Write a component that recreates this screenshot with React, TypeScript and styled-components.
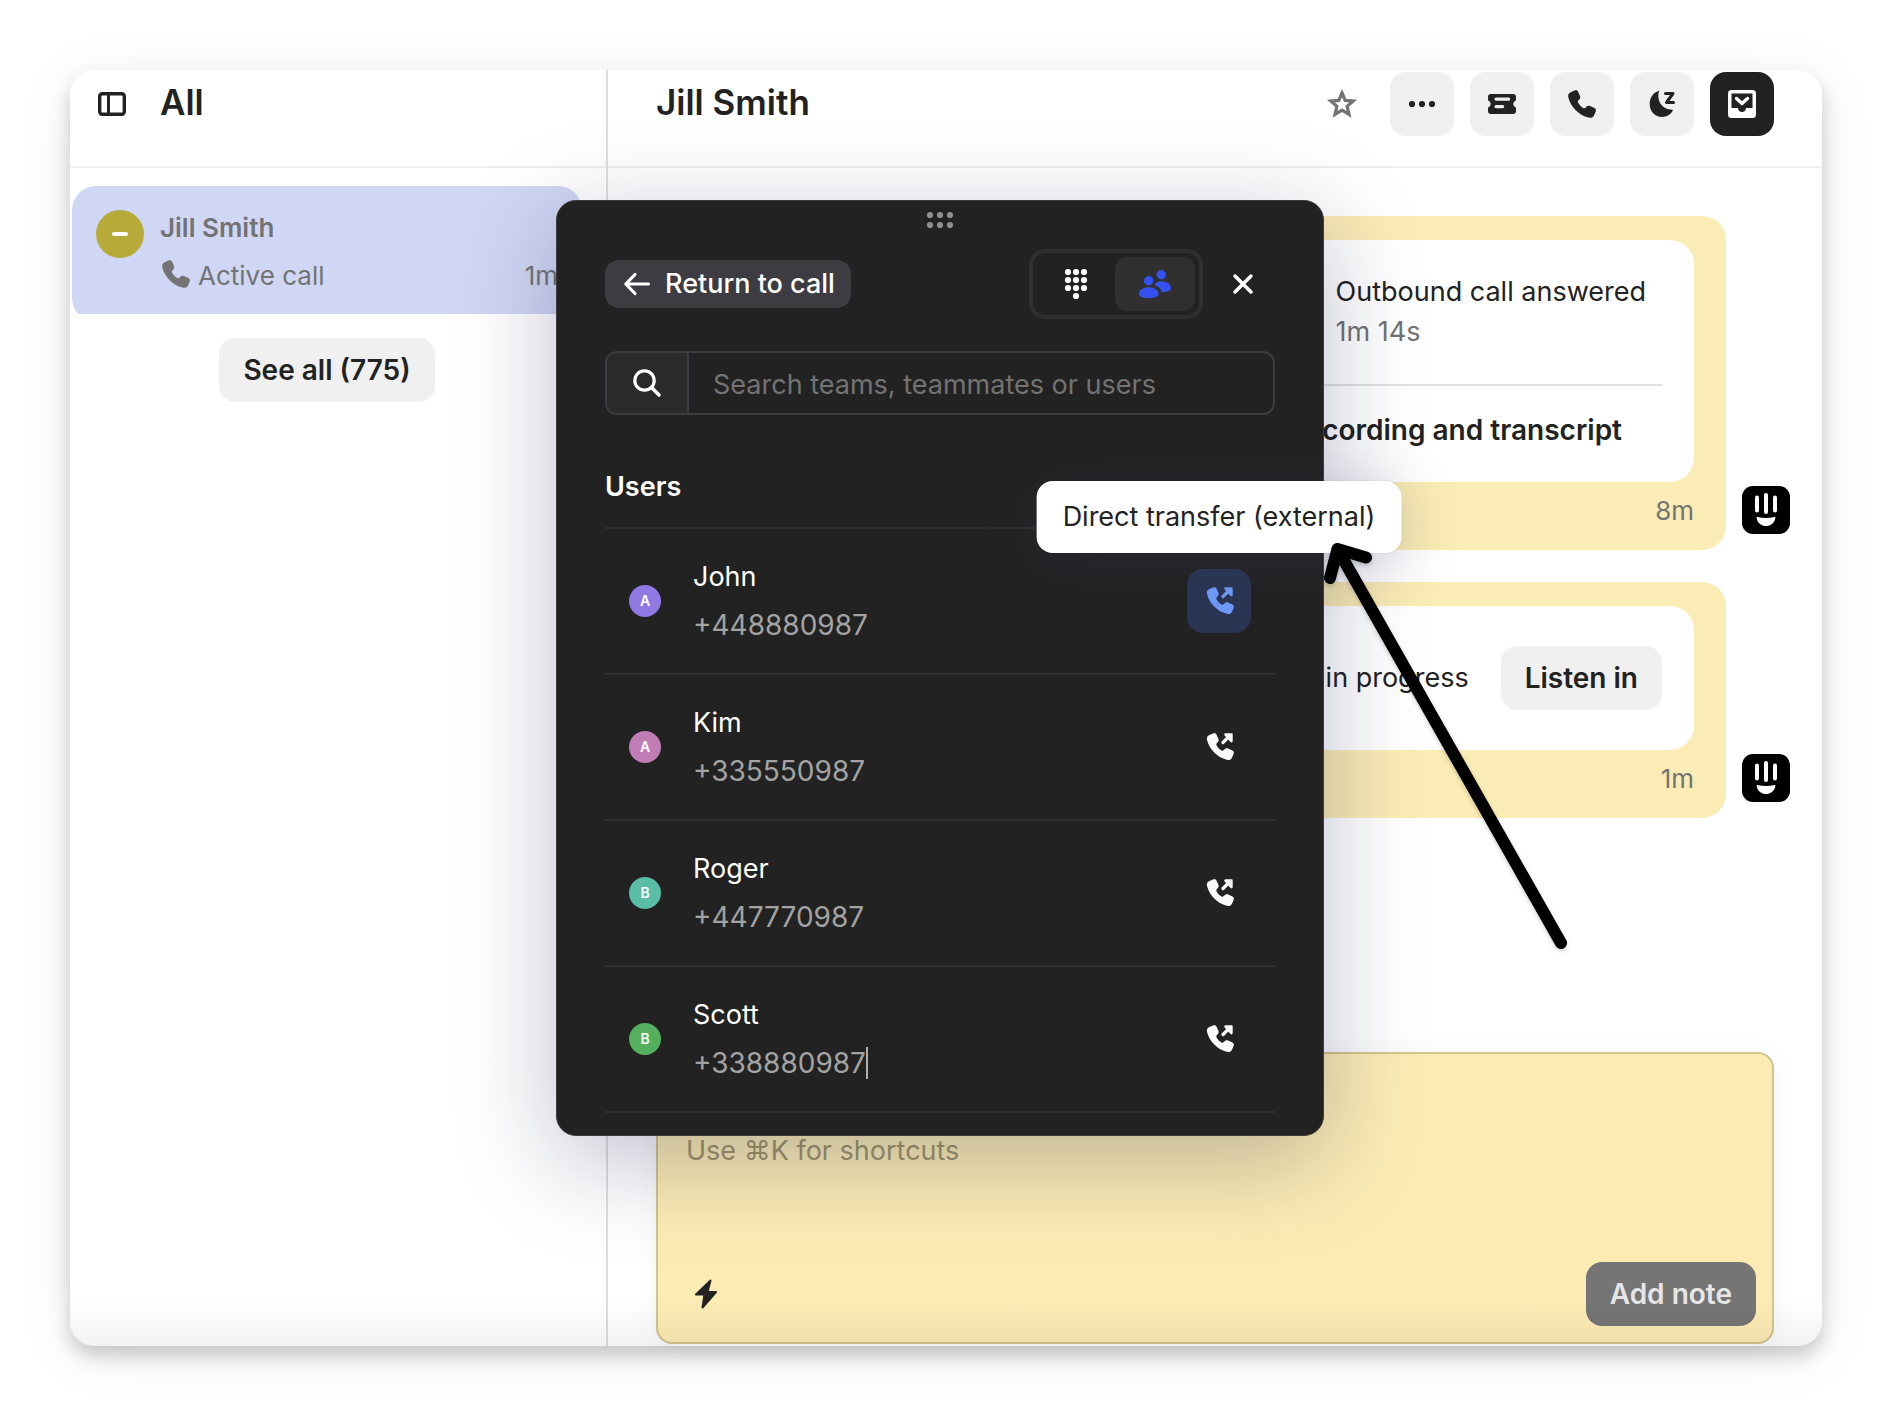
import React from "react";
import styled, { createGlobalStyle, css } from "styled-components";

const GlobalStyle = createGlobalStyle`
  *, *::before, *::after { box-sizing: border-box; }
  body {
    margin: 0;
    background: #fff;
    color: #222;
    font-family: Inter, "Liberation Sans", sans-serif;
    font-size: 27px;
    line-height: 40px;
  }
  h1, h2, p, ul { margin: 0; padding: 0; }
  ul { list-style: none; }
  button, input, textarea { font: inherit; color: inherit; border: 0; margin: 0; }
  button { cursor: pointer; padding: 0; }
  svg { display: block; flex: none; }
`;

const Page = styled.div`
  min-height: 100vh;
  padding: 70px 72px 70px 70px;
  display: flex;
`;

const Window = styled.div`
  position: relative;
  flex: 1;
  display: grid;
  grid-template-columns: 538px minmax(0, 1fr);
  background: #fff;
  border-radius: 24px;
  box-shadow: 0 10px 18px rgba(0, 0, 0, 0.18), 0 8px 56px rgba(0, 0, 0, 0.08);

  &::after {
    content: "";
    position: absolute;
    left: 0;
    right: 0;
    bottom: 0;
    height: 48px;
    border-radius: 0 0 24px 24px;
    background: linear-gradient(rgba(0, 0, 0, 0), rgba(0, 0, 0, 0.05));
    pointer-events: none;
  }
`;

const Sidebar = styled.aside`
  display: flex;
  flex-direction: column;
  border-right: 2px solid #dedede;
`;

const Main = styled.main`
  display: flex;
  flex-direction: column;
`;

const Header = styled.header<{ $main?: boolean }>`
  display: flex;
  align-items: center;
  gap: 16px;
  height: 98px;
  padding: ${(p) => (p.$main ? "2px 48px 30px" : "2px 26px 30px")};
  border-bottom: 2px solid #efefef;
`;

const Title = styled.h1`
  font-size: 35px;
  line-height: 40px;
  font-weight: 600;
  padding-bottom: 4px;
`;

const Actions = styled.div`
  display: flex;
  gap: 16px;
  margin-left: auto;
`;

type Tone = "plain" | "soft" | "dark" | "blue" | "ghost";
const tones: Record<Tone, ReturnType<typeof css>> = {
  plain: css`background: transparent; color: #737373;`,
  soft: css`background: #f0f0f0; color: #222;`,
  dark: css`background: #222; color: #fff;`,
  blue: css`background: #2a3553; color: #6f9bf8;`,
  ghost: css`background: transparent; color: #fafafa;`,
};

const IconButton = styled.button<{ $tone: Tone }>`
  display: flex;
  align-items: center;
  justify-content: center;
  width: 64px;
  height: 64px;
  border-radius: 16px;
  ${(p) => tones[p.$tone]}
`;

const SidebarToggle = styled.button`
  margin-right: 16px;
  background: transparent;
  color: #222;
`;

const TextButton = styled.button<{ $muted?: boolean }>`
  height: 64px;
  padding: 0 24px;
  border-radius: 16px;
  font-weight: 600;
  font-size: 28px;
  white-space: nowrap;
  background: ${(p) => (p.$muted ? "#757575" : "#f0f0f0")};
  color: ${(p) => (p.$muted ? "#e6e6e6" : "#222")};
`;

const ListClip = styled.div`
  height: 128px;
  margin: 18px 24px 24px 2px;
  overflow: hidden;
`;

const Conversation = styled.a`
  display: flex;
  gap: 16px;
  height: 136px;
  padding: 24px;
  border-radius: 24px;
  background: #d0d7f4;
  color: #737373;
  text-decoration: none;
`;

const Avatar = styled.span<{ $color: string; $large?: boolean }>`
  display: flex;
  align-items: center;
  justify-content: center;
  flex: none;
  width: ${(p) => (p.$large ? "48px" : "32px")};
  height: ${(p) => (p.$large ? "48px" : "32px")};
  border-radius: 50%;
  background: ${(p) => p.$color};
  color: #fff;
  font-size: 14px;
  line-height: 16px;
  font-weight: 600;
`;

const Dash = styled.span`
  width: 16px;
  height: 4px;
  border-radius: 2px;
  background: #fff;
`;

const ConversationBody = styled.div`
  flex: 1;
  display: flex;
  flex-direction: column;
  gap: 12px;
  font-size: 26px;
  line-height: 36px;
`;

const ConversationName = styled.span`
  font-weight: 600;
`;

const ConversationMeta = styled.span`
  display: flex;
  align-items: flex-start;
  gap: 6px;
`;

const Ago = styled.time`
  margin-left: auto;
`;

const SeeAll = styled.div`
  display: flex;
  justify-content: center;
  padding-right: 22px;
`;

const Feed = styled.div`
  flex: 1;
  display: flex;
  flex-direction: column;
  align-items: flex-end;
  gap: 32px;
  padding: 48px 32px;
`;

const Entry = styled.article`
  display: flex;
  align-items: flex-end;
  gap: 16px;
`;

const Note = styled.div`
  width: 630px;
  padding: 24px 32px 0;
  border-radius: 24px;
  background: #fbebb4;
`;

const NoteCard = styled.div`
  padding: 32px;
  border-radius: 24px;
  background: #fff;
`;

const NoteFoot = styled.div`
  height: 68px;
  padding-top: 9px;
  text-align: right;
  font-size: 26px;
  color: #737373;
`;

const Logo = styled.span`
  padding-bottom: 16px;
`;

const CallRow = styled.div`
  display: flex;
  justify-content: flex-end;
  align-items: center;
  gap: 32px;
`;

const CallSummary = styled.div`
  padding: 0 16px 32px 0;
`;

const Muted = styled.p`
  color: #737373;
`;

const Divider = styled.hr`
  height: 2px;
  margin: 0;
  border: 0;
  background: #e0e0e0;
`;

const RecordingLink = styled.a`
  display: block;
  padding: 24px 40px 0 0;
  text-align: right;
  font-size: 28px;
  font-weight: 600;
  color: #222;
  text-decoration: none;
`;

const CallCard = styled(NoteCard)`
  padding: 40px 32px;
`;

const Composer = styled.form`
  display: flex;
  flex-direction: column;
  height: 292px;
  margin: 0 48px 2px;
  padding: 77px 16px 16px 28px;
  border: 2px solid #d3c48a;
  border-radius: 16px;
  background: #fcecb4;
  box-shadow: 0 2px 24px rgba(20, 30, 80, 0.05);
`;

const NoteInput = styled.textarea`
  flex: 1;
  padding: 0;
  border: 0;
  outline: 0;
  resize: none;
  overflow: hidden;
  background: transparent;
  &::placeholder { color: #a09468; opacity: 1; }
`;

const ComposerBar = styled.div`
  display: flex;
  align-items: center;
  justify-content: space-between;
`;

const BoltButton = styled.button`
  display: flex;
  align-items: center;
  justify-content: center;
  width: 40px;
  height: 40px;
  background: transparent;
  color: #222;
`;

const CallPanel = styled.section`
  position: absolute;
  z-index: 2;
  top: 130px;
  left: 486px;
  width: 768px;
  height: 936px;
  padding: 10px 48px 0;
  border: 1px solid #3d3c42;
  border-radius: 20px;
  background: #222;
  color: #fff;
  box-shadow: 0 24px 100px rgba(16, 20, 70, 0.27);
`;

const Grip = styled.div`
  display: flex;
  justify-content: center;
`;

const PanelBar = styled.div`
  display: flex;
  align-items: center;
  height: 70px;
  margin: 20px 0 32px;
`;

const ReturnButton = styled.button`
  display: flex;
  align-items: center;
  gap: 12px;
  height: 48px;
  padding: 0 16px;
  border-radius: 14px;
  background: #3d3c42;
  font-weight: 500;
  white-space: nowrap;
`;

const Segments = styled.div`
  display: flex;
  margin-left: auto;
  padding: 4px;
  border: 4px solid #303030;
  border-radius: 16px;
`;

const Segment = styled.button<{ $on?: boolean }>`
  display: flex;
  align-items: center;
  justify-content: center;
  width: ${(p) => (p.$on ? "80px" : "78px")};
  height: 54px;
  border-radius: 12px;
  background: ${(p) => (p.$on ? "#303030" : "transparent")};
  color: ${(p) => (p.$on ? "#3452f3" : "#fff")};
`;

const CloseButton = styled.button`
  margin: 0 16px 0 24px;
  padding: 0;
  background: transparent;
  color: #fff;
`;

const SearchBox = styled.label`
  display: flex;
  height: 64px;
  border: 2px solid #3d3c42;
  border-radius: 12px;
  overflow: hidden;
`;

const SearchIconCell = styled.span`
  display: flex;
  align-items: center;
  justify-content: center;
  width: 82px;
  border-right: 2px solid #3d3c42;
  background: #2a2a2c;
`;

const SearchInput = styled.input`
  flex: 1;
  min-width: 0;
  padding: 4px 24px 0;
  outline: 0;
  background: transparent;
  &::placeholder { color: #737373; opacity: 1; }
`;

const GroupTitle = styled.h2`
  padding: 52px 0 20px;
  border-bottom: 2px solid #303030;
  font-size: 27px;
  line-height: 40px;
  font-weight: 600;
`;

const UserRow = styled.li`
  display: flex;
  align-items: center;
  height: 146px;
  padding: 0 24px;
  gap: 32px;
  border-bottom: 2px solid #303030;
`;

const UserText = styled.div`
  flex: 1;
  line-height: 48px;
`;

const Phone = styled.p`
  display: flex;
  align-items: center;
  font-size: 28px;
  color: #a3a3a3;
`;

const Caret = styled.span`
  width: 2px;
  height: 32px;
  background: #b0b0b0;
`;

const TransferSlot = styled.div`
  position: relative;
`;

const Tooltip = styled.div`
  position: absolute;
  bottom: 80px;
  left: 50%;
  transform: translateX(-50%);
  padding: 16px 26px;
  border-radius: 16px;
  background: #fff;
  color: #222;
  white-space: nowrap;
  box-shadow: 0 0 0 1px rgba(0, 0, 0, 0.04), 0 8px 56px rgba(60, 66, 110, 0.25);
`;

const Pointer = styled.svg`
  position: absolute;
  top: 335px;
  left: 760px;
  filter: drop-shadow(0 2px 2px rgba(0, 0, 0, 0.2));
`;

const PHONE =
  "M8.3 2.6C9.8 1.8 11.3 2 12 3.4L14 8c.7 1.6.1 2.8-1 3.8-1.2 1-1.4 1.8-.8 3C13.3 17 15.2 18.9 17.2 19.9c1.2.6 2 .3 3-.9 1-1.2 2.3-1.7 3.9-1l4.4 2c1.5.7 1.8 2.2 1.1 3.8l-1.6 3.6C27 29.6 25 30.2 22.7 29.6 12.5 27 4.5 18.5 2.3 9.2 1.8 7 2.5 5.3 4.3 4.4z";

const Icon = ({ children }: { children: React.ReactNode }) => (
  <svg width="32" height="32" viewBox="0 0 32 32" fill="currentColor" aria-hidden="true">
    {children}
  </svg>
);

const PhoneIcon = () => <Icon><path d={PHONE} /></Icon>;

const PanelIcon = () => (
  <Icon>
    <rect x="3.7" y="5.7" width="24.6" height="20.6" rx="2.5" fill="none" stroke="currentColor" strokeWidth="3.4" />
    <path d="M11 5h3v22h-3z" />
  </Icon>
);

const StarIcon = () => (
  <Icon>
    <path d="M16 5l3.200 7.400 8 .700-6.100 5.300 1.900 8L16 22.100l-7 4.300 1.900-8-6.100-5.300 8-.700z" fill="none" stroke="currentColor" strokeWidth="3.200" />
  </Icon>
);

const DotsIcon = () => (
  <Icon>
    <circle cx="6" cy="16" r="3.100" /><circle cx="16" cy="16" r="3.100" /><circle cx="26" cy="16" r="3.100" />
  </Icon>
);

const TicketIcon = () => (
  <Icon>
    <path
      fillRule="evenodd"
      d="M5 6h22a3 3 0 0 1 3 3v3.500c-3.600 1.200-3.600 5.800 0 7V23a3 3 0 0 1-3 3H5a3 3 0 0 1-3-3v-3.500c3.600-1.200 3.600-5.800 0-7V9a3 3 0 0 1 3-3zM10 9.500a1.600 1.600 0 0 0 0 3.200h12.700a1.600 1.600 0 0 0 0-3.200zM10 17a1.600 1.600 0 0 0 0 3.200h6.700a1.600 1.600 0 0 0 0-3.200z"
    />
  </Icon>
);

const SnoozeIcon = () => (
  <Icon>
    <path d="M13.300 2.800C10.500 9 13.500 21.500 26.500 21.800 27 21.800 27 22.200 26.800 22.600 24.800 26.500 20.800 29 16 29 9 29 3.700 23.500 3.700 16 3.700 9.500 7.500 4.300 13.300 2.800z" />
    <path d="M19.500 5.500h7.500L20.500 14.500h7" fill="none" stroke="currentColor" strokeWidth="3" strokeLinejoin="round" strokeLinecap="round" />
  </Icon>
);

const CloseInboxIcon = () => (
  <Icon>
    <path fillRule="evenodd" d="M5.500 2h21A3.500 3.500 0 0 1 30 5.500v21a3.500 3.500 0 0 1-3.500 3.500h-21A3.500 3.500 0 0 1 2 26.500v-21A3.500 3.500 0 0 1 5.500 2zM5.500 5.500V20H12c0 5.300 8 5.300 8 0h6.500V5.500z" />
    <path d="M10.500 10.500L16 15.500l5.500-5" fill="none" stroke="currentColor" strokeWidth="3.400" strokeLinecap="round" strokeLinejoin="round" />
  </Icon>
);

const TransferIcon = () => (
  <Icon>
    <path d={PHONE} transform="translate(1.800 .1) scale(.97)" />
    <path d="M22.500 2.300h6.200a1 1 0 0 1 1 1v6.800a1.300 1.300 0 0 1-2.200.9L21.600 4.500a1.300 1.300 0 0 1 .9-2.200z" />
    <path d="M20 11.500l6-6" stroke="currentColor" strokeWidth="3.200" strokeLinecap="round" />
  </Icon>
);

const KeypadIcon = () => (
  <Icon>
    {[4, 12, 20].flatMap((y) => [8, 16, 24].map((x) => <circle key={`${x}-${y}`} cx={x} cy={y} r="3.100" />))}
    <circle cx="16" cy="28" r="3.100" />
  </Icon>
);

const PeopleIcon = () => (
  <Icon>
    <g transform="translate(0 2)">
      <circle cx="9.700" cy="10.700" r="4.700" />
      <circle cx="22.300" cy="4.700" r="4.700" />
      <path d="M9.800 17.300C4 17.300 0 20.500 0 24c0 3 4 4 9.800 4s9.800-1 9.800-4c0-3.500-4-6.700-9.800-6.700z" />
      <path d="M22.300 11.300c-2.800 0-5 1-6.300 2.500v1.700c3.500 1 6 3.500 6.800 6.500C28.500 21.800 32 21 32 18.200c0-3.700-4-6.900-9.700-6.900z" />
    </g>
  </Icon>
);

const CloseIcon = () => (
  <Icon>
    <path d="M8 8l16 16M24 8L8 24" stroke="currentColor" strokeWidth="3.500" strokeLinecap="round" />
  </Icon>
);

const BackIcon = () => (
  <Icon>
    <path d="M27.500 16H5M14 6.500L4.800 16l9.200 9.500" fill="none" stroke="currentColor" strokeWidth="3.200" strokeLinecap="round" strokeLinejoin="round" />
  </Icon>
);

const SearchIcon = () => (
  <Icon>
    <circle cx="13.500" cy="13.500" r="9.700" fill="none" stroke="currentColor" strokeWidth="3.200" />
    <path d="M20.500 20.500l7.500 7.500" stroke="currentColor" strokeWidth="3.600" strokeLinecap="round" />
  </Icon>
);

const BoltIcon = () => (
  <Icon>
    <path d="M20.500 2.500L6 16.500h8.500L12.500 29.500 26 14h-8.500z" stroke="currentColor" strokeWidth="2" strokeLinejoin="round" />
  </Icon>
);

const GripIcon = () => (
  <svg width="28" height="18" viewBox="0 0 28 18" fill="#8f8f8f" aria-hidden="true">
    {[4, 14].flatMap((y) => [4, 14, 24].map((x) => <circle key={`${x}-${y}`} cx={x} cy={y} r="3.100" />))}
  </svg>
);

const BotLogo = () => (
  <Logo>
    <svg width="48" height="48" viewBox="0 0 48 48" fill="#fff" role="img" aria-label="Workspace bot">
      <rect width="48" height="48" rx="11" fill="#000" />
      <rect x="13" y="9.500" width="4" height="17" rx="2" />
      <rect x="22" y="7" width="4" height="21" rx="2" />
      <rect x="31" y="9.500" width="4" height="17" rx="2" />
      <path d="M15.500 31q8.500 2 17 0c1 0 1 .5.800 1.200C32.500 37 28.500 40 24 40s-8.500-3-9.300-7.800c-.2-.7-.2-1.200.8-1.200z" />
    </svg>
  </Logo>
);

const users = [
  { name: "John", phone: "+448880987", initial: "A", color: "#9079e2", active: true },
  { name: "Kim", phone: "+335550987", initial: "A", color: "#c07cb5" },
  { name: "Roger", phone: "+447770987", initial: "B", color: "#5abda8" },
  { name: "Scott", phone: "+338880987", initial: "B", color: "#54b05e", editing: true },
];

export default function App() {
  return (
    <>
      <GlobalStyle />
      <Page>
        <Window>
          <Sidebar>
            <Header>
              <SidebarToggle aria-label="Toggle sidebar"><PanelIcon /></SidebarToggle>
              <Title>All</Title>
            </Header>
            <ListClip>
              <Conversation href="#jill-smith">
                <Avatar $large $color="#b8aa38"><Dash /></Avatar>
                <ConversationBody>
                  <ConversationName>Jill Smith</ConversationName>
                  <ConversationMeta>
                    <PhoneIcon />
                    Active call
                    <Ago>1m</Ago>
                  </ConversationMeta>
                </ConversationBody>
              </Conversation>
            </ListClip>
            <SeeAll>
              <TextButton>See all (775)</TextButton>
            </SeeAll>
          </Sidebar>

          <Main>
            <Header $main>
              <Title>Jill Smith</Title>
              <Actions>
                <IconButton $tone="plain" aria-label="Star"><StarIcon /></IconButton>
                <IconButton $tone="soft" aria-label="More"><DotsIcon /></IconButton>
                <IconButton $tone="soft" aria-label="Create ticket"><TicketIcon /></IconButton>
                <IconButton $tone="soft" aria-label="Call"><PhoneIcon /></IconButton>
                <IconButton $tone="soft" aria-label="Snooze"><SnoozeIcon /></IconButton>
                <IconButton $tone="dark" aria-label="Close conversation"><CloseInboxIcon /></IconButton>
              </Actions>
            </Header>
            <Feed>
              <Entry>
                <Note>
                  <NoteCard>
                    <CallRow>
                      <CallSummary>
                        <p>Outbound call answered</p>
                        <Muted>1m 14s</Muted>
                      </CallSummary>
                    </CallRow>
                    <Divider />
                    <RecordingLink href="#recording">Recording and transcript</RecordingLink>
                  </NoteCard>
                  <NoteFoot>8m</NoteFoot>
                </Note>
                <BotLogo />
              </Entry>
              <Entry>
                <Note>
                  <CallCard>
                    <CallRow>
                      <span>Call in progress</span>
                      <TextButton>Listen in</TextButton>
                    </CallRow>
                  </CallCard>
                  <NoteFoot>1m</NoteFoot>
                </Note>
                <BotLogo />
              </Entry>
            </Feed>
            <Composer>
              <NoteInput aria-label="Note" placeholder="Use ⌘K for shortcuts" />
              <ComposerBar>
                <BoltButton type="button" aria-label="Shortcuts"><BoltIcon /></BoltButton>
                <TextButton $muted type="button">Add note</TextButton>
              </ComposerBar>
            </Composer>
          </Main>

          <CallPanel aria-label="Transfer call">
            <Grip><GripIcon /></Grip>
            <PanelBar>
              <ReturnButton><BackIcon />Return to call</ReturnButton>
              <Segments>
                <Segment aria-label="Keypad"><KeypadIcon /></Segment>
                <Segment $on aria-label="Teammates and users"><PeopleIcon /></Segment>
              </Segments>
              <CloseButton aria-label="Close"><CloseIcon /></CloseButton>
            </PanelBar>
            <SearchBox>
              <SearchIconCell><SearchIcon /></SearchIconCell>
              <SearchInput aria-label="Search" placeholder="Search teams, teammates or users" />
            </SearchBox>
            <GroupTitle>Users</GroupTitle>
            <ul>
              {users.map((u) => (
                <UserRow key={u.name}>
                  <Avatar $color={u.color}>{u.initial}</Avatar>
                  <UserText>
                    <p>{u.name}</p>
                    <Phone>{u.phone}{u.editing && <Caret />}</Phone>
                  </UserText>
                  <TransferSlot>
                    <IconButton $tone={u.active ? "blue" : "ghost"} aria-label={`Transfer to ${u.name}`}>
                      <TransferIcon />
                    </IconButton>
                    {u.active && <Tooltip role="tooltip">Direct transfer (external)</Tooltip>}
                  </TransferSlot>
                </UserRow>
              ))}
            </ul>
            <Pointer width="260" height="420" viewBox="1317 536 260 420" fill="none" stroke="#000" strokeWidth="12" strokeLinecap="round" strokeLinejoin="round" aria-hidden="true">
              <path d="M1330 578l7.500-29 28.500 8.500M1338 550L1561 943" />
            </Pointer>
          </CallPanel>
        </Window>
      </Page>
    </>
  );
}
